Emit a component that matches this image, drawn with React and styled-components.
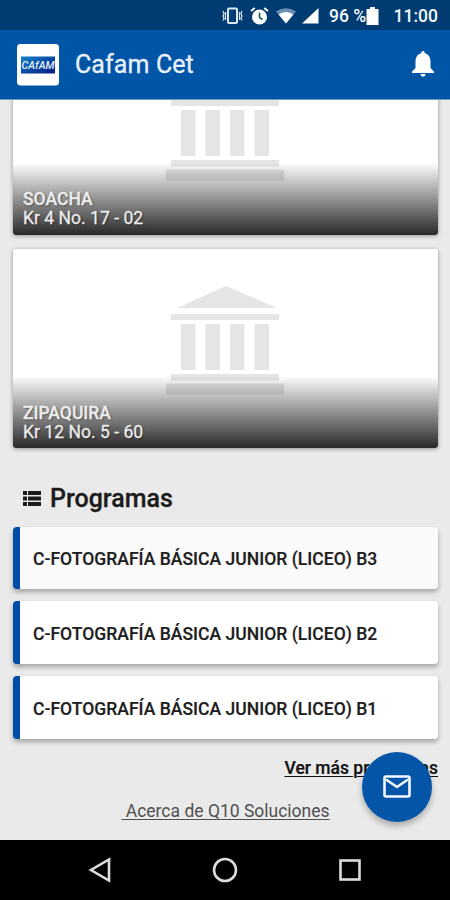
import React from "react";
import styled, { createGlobalStyle } from "styled-components";

const Global = createGlobalStyle`
  *, *::before, *::after { box-sizing: border-box; }
  body { margin: 0; background: #000; font-family: Roboto, "Liberation Sans", sans-serif; }
`;

const Phone = styled.div`
  width: 450px;
  height: 900px;
  display: flex;
  flex-direction: column;
  overflow: hidden;
  background: #eaeaea;
`;

const StatusBar = styled.div`
  height: 30px;
  flex: none;
  display: flex;
  align-items: center;
  padding: 1px 12px 0 222px;
  background: #003c71;
  color: #f3f7fb;
`;

const StatusIcon = styled.svg`
  flex: none;
  display: block;
  width: ${(p) => p.$w}px;
  height: ${(p) => p.$h}px;
  margin-right: ${(p) => p.$gap}px;
`;

const StatusText = styled.span`
  font-size: 17.5px;
  font-weight: 500;
  line-height: 20px;
  white-space: nowrap;
  margin-left: ${(p) => (p.$end ? "auto" : 0)};
  padding-top: 1px;
`;

const AppBar = styled.header`
  height: 70px;
  flex: none;
  display: flex;
  align-items: center;
  padding: 0 15px 0 17px;
  background: #0055a6;
  border-bottom: 1px solid #6f9ac6;
`;

const Logo = styled.svg`
  display: block;
  width: 42px;
  height: 42px;
  flex: none;
`;

const Title = styled.h1`
  margin: 1px auto 0 16px;
  font-size: 25px;
  font-weight: 400;
  line-height: 30px;
  letter-spacing: 0.1px;
  color: #e9f1fa;
  -webkit-text-stroke: 0.3px #e9f1fa;
`;

const Bell = styled.svg`
  display: block;
  width: 24px;
  height: 28px;
  margin-top: -1px;
`;

const Content = styled.main`
  position: relative;
  flex: 1;
  min-height: 0;
  overflow: hidden;
  padding: 0 12px 0 13px;
`;

const Campuses = styled.section`
  display: flex;
  flex-direction: column;
  gap: 14px;
  margin-top: -65px;
`;

const Campus = styled.article`
  position: relative;
  height: 199.5px;
  border-radius: 3px;
  overflow: hidden;
  background: #fff;
`;

const CampusShadow = styled.div`
  border-radius: 3px;
  box-shadow: 0 1px 4px rgba(0, 0, 0, 0.38);
`;

const Building = styled.svg`
  display: block;
  width: 118px;
  height: 110px;
  margin: 36px 0 0 153px;
`;

const Caption = styled.div`
  position: absolute;
  left: 0;
  right: 0;
  bottom: 0;
  height: 71px;
  padding: 26.5px 10px 0;
  background: linear-gradient(rgba(0, 0, 0, 0.02), rgba(0, 0, 0, 0.4) 46%, rgba(0, 0, 0, 0.84));
  color: #ececec;
  font-size: 17.5px;
  line-height: 19px;
  text-shadow: 1px 1px 2px rgba(0, 0, 0, 0.45);
`;

const CampusName = styled.div`
  font-weight: 500;
  -webkit-text-stroke: 0.3px #ececec;
`;

const CampusAddress = styled.div`
  letter-spacing: 0.03px;
  -webkit-text-stroke: 0.3px #ececec;
`;

const SectionHeading = styled.h2`
  display: flex;
  align-items: center;
  gap: 9px;
  height: 32px;
  margin: 35px 0 11.5px;
  padding-left: 10px;
  font-size: 25px;
  font-weight: 500;
  line-height: 32px;
  color: #1c1c1c;
  -webkit-text-stroke: 0.3px #1c1c1c;
`;

const ListIcon = styled.svg`
  display: block;
  width: 18px;
  height: 15px;
  margin-top: -2px;
`;

const Programs = styled.ul`
  list-style: none;
  display: flex;
  flex-direction: column;
  gap: 12.7px;
  margin: 0;
  padding: 0;
`;

const Program = styled.li`
  height: 62.3px;
  display: flex;
  align-items: center;
  padding: 2px 0 0 13px;
  border-left: 7.5px solid #004ba6;
  border-radius: 4px;
  background: ${(p) => (p.$pressed ? "#fafafa" : "#fff")};
  box-shadow: 0 3px 5px rgba(0, 0, 0, 0.3);
  color: #1d1d1d;
  font-size: 17.5px;
  font-weight: 500;
  letter-spacing: 0.03px;
  white-space: nowrap;
  -webkit-text-stroke: 0.2px #1d1d1d;
`;

const MoreRow = styled.div`
  display: flex;
  justify-content: flex-end;
  height: 22px;
  margin-top: 18.6px;
`;

const MoreLink = styled.a`
  font-size: 17.5px;
  line-height: 22px;
  font-weight: 500;
  color: #111;
  text-decoration: underline;
  text-decoration-thickness: 1px;
  text-underline-offset: 2px;
  -webkit-text-stroke: 0.2px #111;
`;

const AboutRow = styled.div`
  display: flex;
  justify-content: center;
  height: 22px;
  margin-top: 21px;
`;

const AboutLink = styled.a`
  font-size: 17.5px;
  line-height: 22px;
  color: #505050;
  white-space: pre;
  text-decoration: underline;
  text-decoration-thickness: 1px;
  text-underline-offset: 2px;
`;

const MailButton = styled.button`
  position: absolute;
  right: 18.5px;
  bottom: 18.5px;
  width: 70px;
  height: 70px;
  padding: 0;
  border: 0;
  border-radius: 50%;
  display: grid;
  place-items: center;
  background: #0455a8;
  box-shadow: 0 4px 6px rgba(0, 0, 0, 0.28);
`;

const NavBar = styled.nav`
  height: 60px;
  flex: none;
  display: flex;
  justify-content: space-between;
  align-items: center;
  padding: 0 87px;
  background: #000;
`;

const NavIcon = styled.svg`
  display: block;
  width: 26px;
  height: 26px;
  fill: none;
  stroke: #dcdcdc;
  stroke-width: 2.6;
`;

function BuildingDrawing() {
  return (
    <Building viewBox="0 0 118 110" fill="#e5e5e5">
      <path d="M60 1 L111 23 H11 Z" />
      <path d="M5 29h108v6H5z M5 89h108v6.500H5z M0 98.500h118.500v11H0z" />
      <path d="M15 39h14.500v46H15z M39.500 39h14.500v46H39.500z M64 39h14.500v46H64z M88.500 39h14.500v46H88.500z" />
    </Building>
  );
}

function CampusCard({ name, address }) {
  return (
    <CampusShadow>
      <Campus>
        <BuildingDrawing />
        <Caption>
          <CampusName>{name}</CampusName>
          <CampusAddress>{address}</CampusAddress>
        </Caption>
      </Campus>
    </CampusShadow>
  );
}

const programs = [
  "C-FOTOGRAFÍA BÁSICA JUNIOR (LICEO) B3",
  "C-FOTOGRAFÍA BÁSICA JUNIOR (LICEO) B2",
  "C-FOTOGRAFÍA BÁSICA JUNIOR (LICEO) B1",
];

export default function App() {
  return (
    <Phone>
      <Global />
      <StatusBar>
        <StatusIcon $w={21} $h={18} $gap={7} viewBox="0 0 21 18" fill="none" stroke="#dce7f1" strokeWidth="1.500">
          <rect x="6" y="1.500" width="9" height="14.500" rx="1" strokeWidth="2" />
          <path d="M3.500 5v8M17.500 5v8M1 4l1 2.500-1 2.500 1 2.500-1 2M20 4l-1 2.500 1 2.500-1 2.500 1 2" strokeWidth="1.200" />
        </StatusIcon>
        <StatusIcon $w={19} $h={18} $gap={7} viewBox="0 0 19 18">
          <path d="M1 4 4.800 1M18 4 14.200 1" stroke="#fff" strokeWidth="2" />
          <circle cx="9.500" cy="10" r="7.500" fill="#fff" />
          <path d="M9.500 5.500V10.500L12.500 12.500" fill="none" stroke="#17605f" strokeWidth="1.600" />
        </StatusIcon>
        <StatusIcon $w={20} $h={16} $gap={6} viewBox="0 0 20 16">
          <path d="M0 3.500Q10-3 20 3.500L17.500 6.500H2.500Z" fill="#6a8fb0" />
          <path d="M2.500 6.500Q10 1.500 17.500 6.500L10 15.500Z" fill="#fff" />
        </StatusIcon>
        <StatusIcon $w={17} $h={16} $gap={10} viewBox="0 0 17 16">
          <path d="M16.500 0V15.500H0Z" fill="#fff" />
        </StatusIcon>
        <StatusText>96 %</StatusText>
        <StatusIcon $w={13} $h={18} $gap={0} viewBox="0 0 13 18">
          <path d="M4 0h5v2h3.500v16H.5V2H4z" fill="#fff" />
        </StatusIcon>
        <StatusText $end>11:00</StatusText>
      </StatusBar>
      <AppBar>
        <Logo viewBox="0 0 42 42">
          <defs>
            <linearGradient id="brand" x1="0" y1="0" x2="1" y2="1">
              <stop offset="0" stopColor="#1683c9" />
              <stop offset="0.500" stopColor="#0a4ba4" />
              <stop offset="1" stopColor="#0a1b83" />
            </linearGradient>
          </defs>
          <rect width="42" height="41.500" rx="3.500" fill="#fff" />
          <rect x="4" y="12.500" width="34" height="17" fill="url(#brand)" />
          <text x="4.500" y="25" fontFamily="Roboto, sans-serif" fontSize="11" fontStyle="italic" fontWeight="500" fill="#e4f3ff" textLength="33" lengthAdjust="spacingAndGlyphs">CAfAM</text>
        </Logo>
        <Title>Cafam Cet</Title>
        <Bell viewBox="0 0 24 28" fill="#fff">
          <path d="M12 1C13.200 1 13.800 2 13.800 3.200C17.800 4.200 19.500 7.500 19.500 11.500V18L23 21.500V23H1V21.500L4.500 18V11.500C4.500 7.500 6.200 4.200 10.200 3.200C10.200 2 10.800 1 12 1Z" />
          <path d="M9.500 24H14.500C14.500 27.500 9.500 27.500 9.500 24Z" />
        </Bell>
      </AppBar>
      <Content>
        <Campuses>
          <CampusCard name="SOACHA" address="Kr 4 No. 17 - 02" />
          <CampusCard name="ZIPAQUIRA" address="Kr 12 No. 5 - 60" />
        </Campuses>
        <SectionHeading>
          <ListIcon viewBox="0 0 18 15" fill="#1c1c1c">
            <path d="M0 0h4v4H0zM5 0h13v4H5zM0 5.500h4v4H0zM5 5.500h13v4H5zM0 11h4v4H0zM5 11h13v4H5z" />
          </ListIcon>
          Programas
        </SectionHeading>
        <Programs>
          {programs.map((name, i) => (
            <Program key={name} $pressed={i === 0}>{name}</Program>
          ))}
        </Programs>
        <MoreRow>
          <MoreLink>Ver más programas</MoreLink>
        </MoreRow>
        <AboutRow>
          <AboutLink>{" Acerca de Q10 Soluciones"}</AboutLink>
        </AboutRow>
        <MailButton aria-label="Mensajes">
          <svg width="28" height="23" viewBox="0 0 28 23" fill="none" stroke="#f4f8ff" strokeWidth="2.600">
            <rect x="1.500" y="1.500" width="25" height="20" rx="1.500" />
            <path d="M3 4.500 14 12 25 4.500" />
          </svg>
        </MailButton>
      </Content>
      <NavBar>
        <NavIcon viewBox="0 0 26 26"><path d="M22 2.500V23.500L4 13Z" /></NavIcon>
        <NavIcon viewBox="0 0 26 26"><circle cx="13" cy="13" r="11" /></NavIcon>
        <NavIcon viewBox="0 0 26 26"><rect x="3.500" y="3.500" width="19" height="19" /></NavIcon>
      </NavBar>
    </Phone>
  );
}
